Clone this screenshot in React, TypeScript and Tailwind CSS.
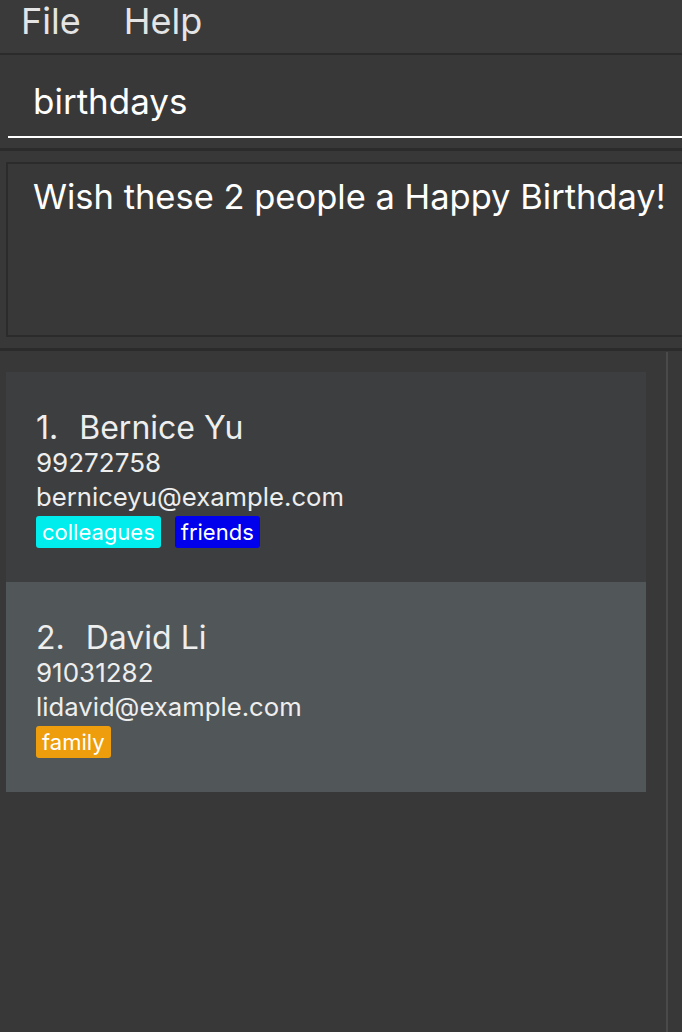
import React from 'react';

type Person = {
  name: string;
  phone: string;
  email: string;
  tags: { label: string; color: string }[];
};

const people: Person[] = [
  {
    name: 'Bernice Yu',
    phone: '99272758',
    email: 'berniceyu@example.com',
    tags: [
      { label: 'colleagues', color: 'bg-[#00eded]' },
      { label: 'friends', color: 'bg-[#0000ec]' },
    ],
  },
  {
    name: 'David Li',
    phone: '91031282',
    email: 'lidavid@example.com',
    tags: [{ label: 'family', color: 'bg-[#ee9e0c]' }],
  },
];

const PersonCard = ({ person, index }: { person: Person; index: number }) => (
  <div
    className={
      'h-[210px] pl-[30px] pt-[38px] ' +
      (index % 2 === 0 ? 'bg-[#3c3e3f]' : 'bg-[#515658]')
    }
  >
    <div className="flex text-[32px] leading-[36px] text-[#eeeeee]">
      <span>{index + 1}.</span>
      <span className="ml-[21px]">{person.name}</span>
    </div>
    <div className="text-[26px] leading-[34px] text-[#eeeeee]">{person.phone}</div>
    <div className="text-[25.7px] leading-[34px] text-[#eeeeee]">{person.email}</div>
    <div className="mt-[2px] flex gap-[14px]">
      {person.tags.map((t) => (
        <span
          key={t.label}
          className={'h-[32px] rounded-[3px] px-[6px] text-[22px] leading-[32px] text-white ' + t.color}
        >
          {t.label}
        </span>
      ))}
    </div>
  </div>
);

export default function App() {
  return (
    <div
      className="flex h-[1032px] w-[682px] flex-col overflow-hidden bg-[#383838]"
      style={{ fontFamily: 'Inter, "Noto Sans", sans-serif' }}
    >
      {/* menu bar */}
      <div className="flex h-[53px] shrink-0 items-start gap-[43px] bg-[#3a3a3a] pl-[21px] text-[36px] leading-[42px] text-[#e4e4e4]">
        <span>File</span>
        <span>Help</span>
      </div>
      <div className="h-[2px] shrink-0 bg-[#2b2b2b]" />

      {/* command box */}
      <div className="h-[93px] shrink-0 pl-[8px] pt-[22px]">
        <div className="h-[61px] border-b-2 border-white pl-[25px] text-[35px] leading-[48px] text-white">
          birthdays
        </div>
      </div>
      <div className="h-[3px] shrink-0 bg-[#2b2b2b]" />

      {/* result display */}
      <div className="h-[197px] shrink-0 pl-[6px] pt-[11px]">
        <div className="h-[175px] w-[700px] border-2 border-[#2b2b2b] pl-[25px] pt-[11px] text-[34.5px] leading-[44px] text-white">
          Wish these 2 people a Happy Birthday!
        </div>
      </div>
      <div className="h-[3px] shrink-0 bg-[#2b2b2b]" />

      {/* person list */}
      <div className="flex flex-1">
        <div className="w-[646px] pl-[6px] pt-[21px]">
          {people.map((p, i) => (
            <PersonCard key={p.name} person={p} index={i} />
          ))}
        </div>
        <div className="ml-[20px] mt-[1px] w-[2px] bg-[#4a4a4a]" />
      </div>
    </div>
  );
}
